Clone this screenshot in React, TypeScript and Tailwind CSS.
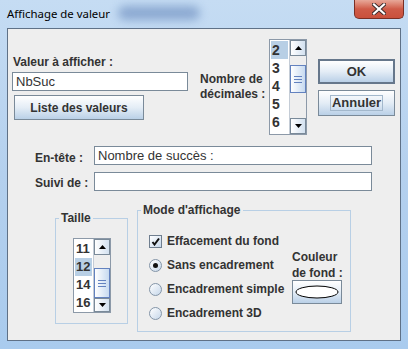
import React from 'react';

// Fenêtre "Affichage de valeur" (look Swing Metal/Ocean dans un cadre Windows 7)

const text = "font-['Liberation_Sans',Arial,sans-serif] text-[#333333]";
const bold = `${text} font-bold text-[12px] leading-[14px]`;
const btnBg = 'bg-linear-to-b from-white via-[#e4edf6] to-[#bad0e7]';

function Arrow({ up }: { up?: boolean }) {
  return (
    <svg width="7" height="4" viewBox="0 0 7 4">
      {up ? <path d="M0 4 L3.5 0 L7 4 Z" fill="#000" /> : <path d="M0 0 L3.5 4 L7 0 Z" fill="#000" />}
    </svg>
  );
}

function ArrowButton({ up, cls }: { up?: boolean; cls: string }) {
  return (
    <div className={`${cls} w-full flex items-center justify-center border border-[#7a8a99] bg-linear-to-r from-white to-[#d3e1f0]`}>
      <Arrow up={up} />
    </div>
  );
}

function Thumb({ cls }: { cls: string }) {
  return (
    <div className={`${cls} w-full flex flex-col items-center justify-center gap-[2px] border border-[#6382bf] bg-linear-to-r from-white to-[#c7daf0]`}>
      <div className="w-[8px] h-px bg-[#6382bf]" />
      <div className="w-[8px] h-px bg-[#6382bf]" />
      <div className="w-[8px] h-px bg-[#6382bf]" />
    </div>
  );
}

type ListProps = {
  items: string[];
  selected: string;
  box: string;
  itemText: string;
  upH: string;
  downH: string;
  gap: string;
  thumbH: string;
  thumbAtBottom?: boolean;
};

function ListBox({ items, selected, box, itemText, upH, downH, gap, thumbH, thumbAtBottom }: ListProps) {
  return (
    <div className={`${box} flex border border-[#8c99a8] bg-white`}>
      <div className="w-[19px] flex flex-col pt-[1px] pl-[1px]">
        {items.map((it) => (
          <div
            key={it}
            className={`h-[18px] w-[17px] flex items-center pl-[1px] ${itemText} ${it === selected ? 'bg-[#b8cfe5]' : ''}`}
          >
            {it}
          </div>
        ))}
      </div>
      <div className="w-[17px] flex flex-col bg-[#eeeeee] border-l border-[#c4ccd6]">
        <ArrowButton up cls={upH} />
        <div className={`flex-1 flex flex-col ${thumbAtBottom ? 'justify-end' : ''}`}>
          <div className={gap} />
          <Thumb cls={thumbH} />
        </div>
        <ArrowButton cls={downH} />
      </div>
    </div>
  );
}

function Radio({ checked, label }: { checked?: boolean; label: string }) {
  return (
    <div className="h-[24px] flex items-center gap-[5px]">
      <div className="w-[13px] h-[13px] rounded-full border border-[#8495a8] bg-linear-to-br from-white to-[#c6d7ea] flex items-center justify-center">
        {checked && <div className="w-[5px] h-[5px] rounded-full bg-[#111111]" />}
      </div>
      <span className={bold}>{label}</span>
    </div>
  );
}

export default function App() {
  return (
    <div className="w-[408px] h-[349px] flex flex-col bg-linear-to-b from-[#c5dcf3] via-[#b4d0ee] to-[#a9cbee] overflow-hidden">
      {/* barre de titre */}
      <div className="relative h-[28px] flex items-start pl-[7px]">
        <div className="absolute left-[118px] top-[6px] w-[82px] h-[14px] rounded-full bg-[#7d9cc9] blur-[5px] opacity-80" />
        <span className="relative mt-[6px] font-['Noto_Sans',sans-serif] text-[11.4px] leading-[16px] text-black">
          Affichage de valeur
        </span>
        <div className="ml-auto mr-[4px] w-[50px] h-[19px] rounded-b-[5px] border border-t-0 border-[#7a2f25] bg-linear-to-b from-[#e7a899] via-[#cf5b48] to-[#c9503c] flex items-center justify-center">
          <svg width="14" height="12" viewBox="0 0 14 12">
            <path d="M2 1.5 L12 10.5 M12 1.5 L2 10.5" stroke="#3b2a2a" strokeWidth="4" strokeLinecap="square" />
            <path d="M2 1.5 L12 10.5 M12 1.5 L2 10.5" stroke="#ffffff" strokeWidth="2.2" strokeLinecap="square" />
          </svg>
        </div>
      </div>

      {/* contenu */}
      <div className="mx-[7px] h-[313px] border border-[#5f7187] bg-[#eeeeee] flex flex-col pt-[10px]">
        {/* ligne 1 */}
        <div className="flex items-start h-[96px]">
          <div className="ml-[4px] w-[176px] flex flex-col pt-[16px]">
            <span className={`${bold} pl-[1px]`}>Valeur à afficher :</span>
            <div className={`mt-[3px] h-[19px] w-[176px] bg-white border border-[#7a8a99] flex items-center pl-[3px] ${text} text-[13px]`}>
              NbSuc
            </div>
            <div className={`mt-[4px] ml-[2px] w-[130px] h-[25px] border border-[#7a8a99] ${btnBg} flex items-center justify-center ${bold}`}>
              Liste des valeurs
            </div>
          </div>
          <div className={`ml-[12px] w-[69px] pt-[33px] ${text} font-bold text-[12px] leading-[15px]`}>
            Nombre de
            <br />
            décimales :
          </div>
          <ListBox
            items={['2', '3', '4', '5', '6']}
            selected="2"
            box="w-[38px] h-[96px]"
            itemText={`${text} font-bold text-[14px] text-[#222222]`}
            upH="h-[16px]"
            downH="h-[16px]"
            gap="h-[9px]"
            thumbH="h-[28px]"
          />
          <div className="ml-[11px] pt-[20px] flex flex-col">
            <div className={`w-[77px] h-[25px] border-2 border-[#66778b] ${btnBg} flex items-center justify-center ${bold} text-[13px]`}>
              OK
            </div>
            <div className={`mt-[6px] w-[77px] h-[26px] border border-[#7a8a99] ${btnBg} flex items-center justify-center`}>
              <span className={`${bold} text-[13px] border border-[#a3b8cc] px-px`}>Annuler</span>
            </div>
          </div>
        </div>

        {/* ligne 2 */}
        <div className="mt-[11px] flex flex-col gap-[7px]">
          <div className="flex items-center">
            <span className={`${bold} w-[59px] ml-[27px] pt-[5px]`}>En-tête :</span>
            <div className={`w-[278px] h-[19px] bg-white border border-[#7a8a99] flex items-center pl-[3px] ${text} text-[13px]`}>
              Nombre de succès :
            </div>
          </div>
          <div className="flex items-center">
            <span className={`${bold} w-[59px] ml-[27px] pt-[3px]`}>Suivi de :</span>
            <div className="w-[278px] h-[19px] bg-white border border-[#7a8a99]" />
          </div>
        </div>

        {/* ligne 3 */}
        <div className="mt-[12px] flex items-start">
          <fieldset className="ml-[47px] mt-[8px] w-[73px] h-[113px] border border-[#b8cfe5]">
            <legend className={`${bold} ml-[3px] px-[2px]`}>Taille</legend>
            <div className="mt-[13px] ml-[17px]">
              <ListBox
                items={['11', '12', '14', '16']}
                selected="12"
                box="w-[38px] h-[75px]"
                itemText={`${text} font-bold text-[13px] text-[#222222]`}
                upH="h-[16px]"
                downH="h-[14px]"
                gap="h-0"
                thumbH="h-[30px]"
                thumbAtBottom
              />
            </div>
          </fieldset>

          <fieldset className="ml-[9px] w-[214px] h-[129px] border border-[#b8cfe5]">
            <legend className={`${bold} ml-[3px] px-[2px]`}>Mode d'affichage</legend>
            <div className="flex mt-[12px] pl-[11px]">
              <div className="w-[143px] flex flex-col">
                <div className="h-[24px] flex items-center gap-[5px]">
                  <div className="w-[13px] h-[13px] border border-[#6f7e8f] bg-linear-to-br from-white to-[#c6d7ea] flex items-center justify-center">
                    <svg width="9" height="9" viewBox="0 0 9 9">
                      <path d="M1.5 5 L3.5 7.5 L8 1.5" stroke="#111" strokeWidth="2" fill="none" />
                    </svg>
                  </div>
                  <span className={bold}>Effacement du fond</span>
                </div>
                <Radio checked label="Sans encadrement" />
                <Radio label="Encadrement simple" />
                <Radio label="Encadrement 3D" />
              </div>
              <div className="pt-[20px] flex flex-col">
                <div className={`${text} font-bold text-[12px] leading-[16px]`}>
                  Couleur
                  <br />
                  de fond :
                </div>
                <div className={`mt-[-1px] w-[50px] h-[24px] border border-[#7a8a99] ${btnBg} flex items-center justify-center`}>
                  <svg width="44" height="14" viewBox="0 0 44 14">
                    <ellipse cx="22" cy="7" rx="21" ry="6" fill="#fff" stroke="#000" strokeWidth="1" />
                  </svg>
                </div>
              </div>
            </div>
          </fieldset>
        </div>
      </div>
    </div>
  );
}
